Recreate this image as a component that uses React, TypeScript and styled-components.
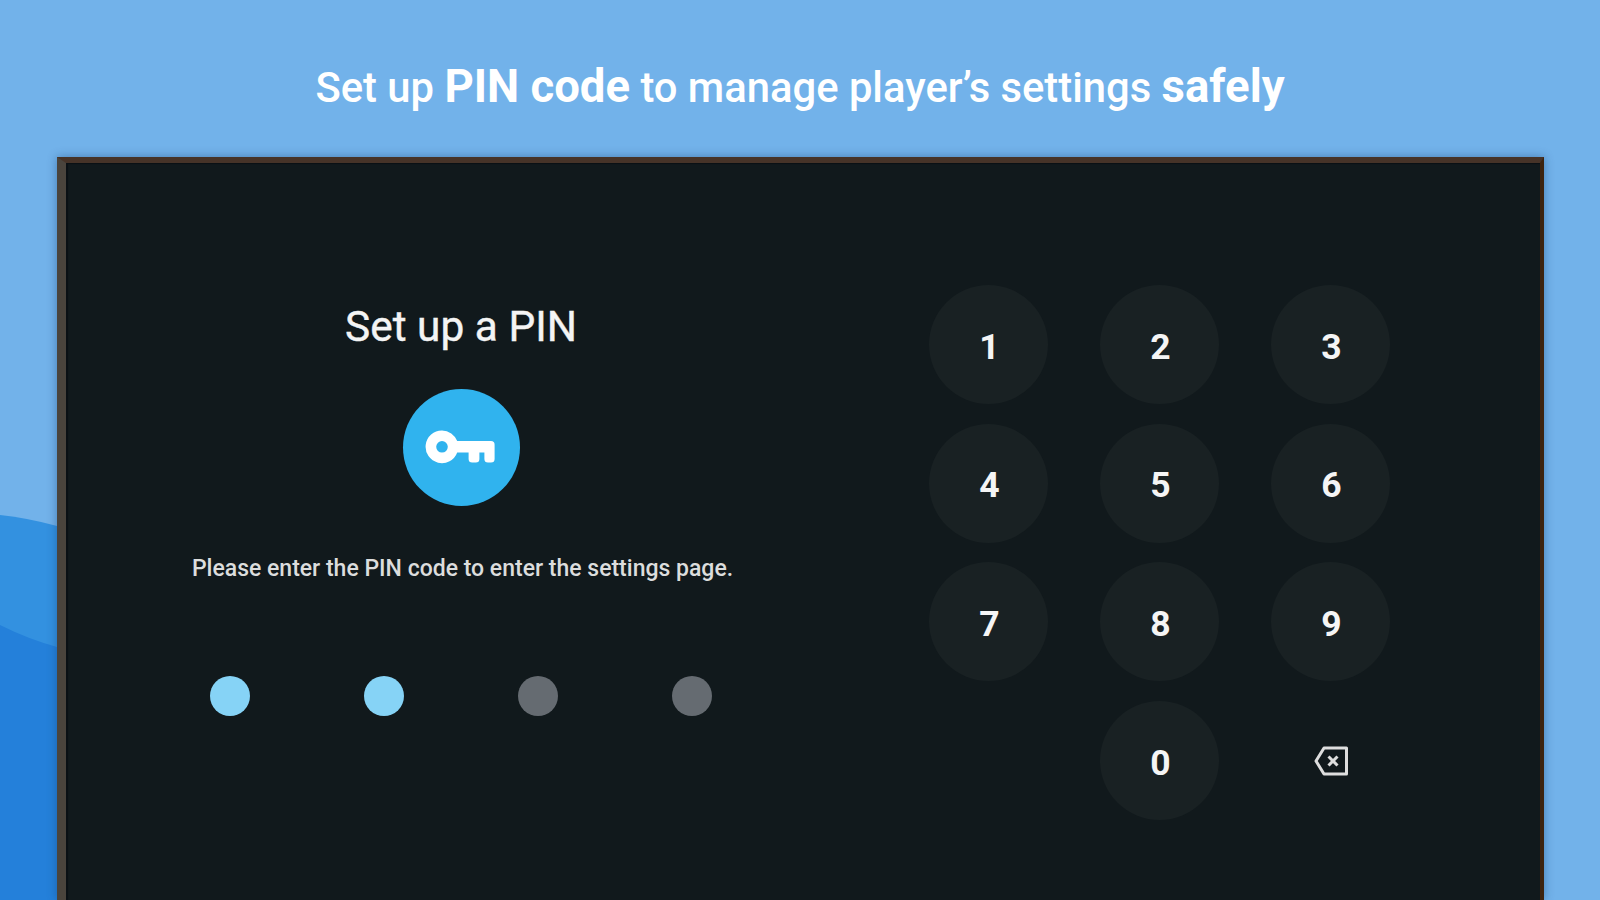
import { FC } from "react";
import styled, { createGlobalStyle } from "styled-components";

const GlobalStyle = createGlobalStyle`
  * {
    box-sizing: border-box;
  }

  body {
    margin: 0;
    overflow: hidden;
    font-family: Roboto, "Liberation Sans", sans-serif;
  }
`;

// styled components
const Page = styled.main`
  position: relative;
  display: flex;
  flex-direction: column;
  width: 1600px;
  height: 900px;
  overflow: hidden;
  background: #72b2ea;
`;

const Waves = styled.svg`
  position: absolute;
  left: 0;
  bottom: 0;
`;

const Headline = styled.h1`
  flex: none;
  height: 157px;
  margin: 0;
  padding-top: 61px;
  color: #fff;
  font-size: 41.75px;
  font-weight: 500;
  line-height: 52px;
  text-align: center;
  white-space: nowrap;

  strong {
    font-size: 45.5px;
    font-weight: 700;
  }
`;

const Screen = styled.section`
  position: relative;
  display: flex;
  flex: 1;
  margin: 0 56px 0 57px;
  border-style: solid;
  border-color: #463328 #3d2410 transparent #4a443d;
  border-width: 6px 4px 0 9px;
  background: #11191c;
  box-shadow: 0 0 9px rgba(20, 60, 110, 0.45), inset 2px 1px 1px #0a1015;
`;

const Setup = styled.div`
  display: flex;
  flex-direction: column;
  align-items: center;
  width: 790px;
  padding-top: 139px;
  color: #f4f4f4;
`;

const Title = styled.h2`
  margin: 0;
  font-size: 42.4px;
  font-weight: 400;
  line-height: 50px;
  -webkit-text-stroke: 0.4px #f4f4f4;
`;

const KeyBadge = styled.div`
  display: flex;
  align-items: center;
  justify-content: center;
  width: 117px;
  height: 117px;
  margin-top: 36.5px;
  padding-right: 3px;
  border-radius: 50%;
  background: #30b3ee;
`;

const Hint = styled.p`
  margin: 47.5px 0 0;
  padding-left: 3px;
  color: #dcdddd;
  font-size: 23px;
  font-weight: 500;
  line-height: 32px;
  white-space: nowrap;
`;

const Dots = styled.div`
  display: flex;
  gap: 114px;
  margin-top: 91px;
`;

const Dot = styled.span<{ $filled: boolean }>`
  width: 40px;
  height: 40px;
  border-radius: 50%;
  background: ${({ $filled }) => ($filled ? "#86d3f6" : "#656b71")};
`;

const Keypad = styled.div`
  display: grid;
  grid-template-columns: repeat(3, 119px);
  grid-auto-rows: 119px;
  gap: 19.7px 52px;
  align-content: start;
  padding: 122px 0 0 73px;
`;

const Key = styled.button<{ $plain?: boolean }>`
  display: flex;
  align-items: center;
  justify-content: center;
  padding: ${({ $plain }) => ($plain ? "1px 0 0 1px" : "6px 0 0 2px")};
  border: 0;
  border-radius: 50%;
  background: ${({ $plain }) => ($plain ? "none" : "#192123")};
  color: #f5f5f5;
  font-family: inherit;
  font-size: 35.5px;
  font-weight: 700;
  line-height: 1;
`;

const KeyIcon: FC = () => (
  <svg width="70" height="34" viewBox="0 0 70 34" fill="#fff" aria-hidden="true">
    <path
      fillRule="evenodd"
      d="M17 0.5a16.3 16.3 0 0 1 15.2 10.6H66a3.6 3.6 0 0 1 3.6 3.6V29a3.6 3.6 0 0 1-3.6 3.6h-3a3.6 3.6 0 0 1-3.6-3.6v-6.6h-5V29a3.6 3.6 0 0 1-3.6 3.6h-3.6a3.6 3.6 0 0 1-3.6-3.6v-6.6H32.2A16.3 16.3 0 1 1 17 0.5ZM17 11a5.8 5.8 0 1 0 0 11.6A5.8 5.8 0 0 0 17 11Z"
    />
  </svg>
);

const BackspaceIcon: FC = () => (
  <svg width="35" height="30" viewBox="0 0 35 30" fill="none" stroke="#dedede" aria-hidden="true">
    <path d="M10 2H32.5V28H10L2 15Z" strokeWidth="3" strokeLinejoin="round" />
    <path d="M14.5 10.5l9 9M23.5 10.5l-9 9" strokeWidth="3" />
  </svg>
);

const digits = ["1", "2", "3", "4", "5", "6", "7", "8", "9"];
const entered = 2;

const App: FC = () => {
  return (
    <Page>
      <GlobalStyle />

      <Waves width="120" height="400" viewBox="0 0 120 400" aria-hidden="true">
        <path d="M0 15Q28 18 57 26L120 46V400H0Z" fill="#3391e0" />
        <path d="M0 125Q28 139 57 147L120 164V400H0Z" fill="#2480da" />
      </Waves>

      <Headline>
        Set up <strong>PIN code</strong> to manage player’s settings <strong>safely</strong>
      </Headline>

      <Screen>
        <Setup>
          <Title>Set up a PIN</Title>
          <KeyBadge>
            <KeyIcon />
          </KeyBadge>
          <Hint>Please enter the PIN code to enter the settings page.</Hint>
          <Dots>
            {[0, 1, 2, 3].map((item) => (
              <Dot key={item} $filled={item < entered} />
            ))}
          </Dots>
        </Setup>

        <Keypad>
          {digits.map((digit) => (
            <Key key={digit}>{digit}</Key>
          ))}
          <span />
          <Key>0</Key>
          <Key $plain aria-label="Delete">
            <BackspaceIcon />
          </Key>
        </Keypad>
      </Screen>
    </Page>
  );
};

export default App;
